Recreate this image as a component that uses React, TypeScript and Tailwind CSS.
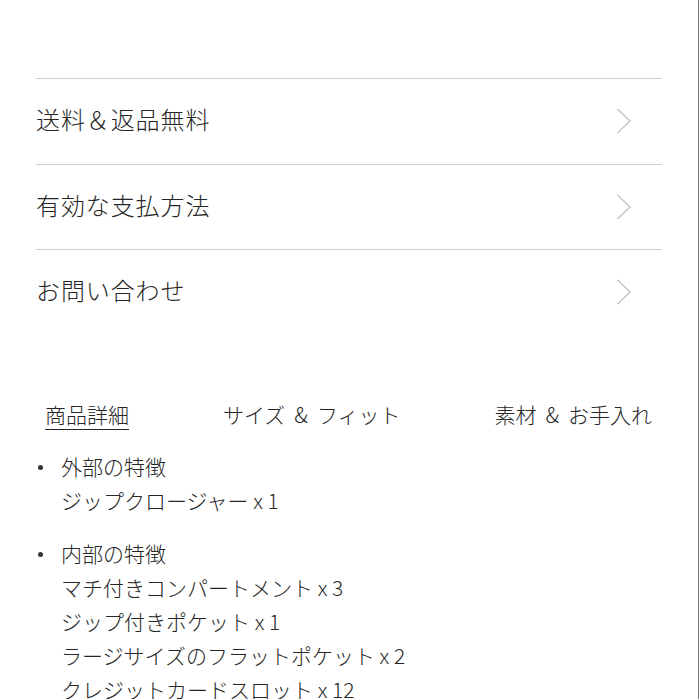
import React from "react";

const font = { fontFamily: '"Noto Sans CJK JP", "Noto Sans", sans-serif' };

function Chevron() {
  return (
    <svg width="16" height="26" viewBox="0 0 16 26" className="mr-[30px]">
      <polyline points="1.5,1 14,13 1.5,25" fill="none" stroke="#c8c8c8" strokeWidth="1.6" />
    </svg>
  );
}

const rows = ["送料＆返品無料", "有効な支払方法", "お問い合わせ"];

const groups = [
  { title: "外部の特徴", items: ["ジップクロージャー x 1"] },
  {
    title: "内部の特徴",
    items: [
      "マチ付きコンパートメント x 3",
      "ジップ付きポケット x 1",
      "ラージサイズのフラットポケット x 2",
      "クレジットカードスロット x 12",
    ],
  },
];

export default function App() {
  return (
    <div className="w-[699px] h-[699px] overflow-hidden bg-white text-[#262626] font-light" style={font}>
      <div className="w-[699px] h-[699px] border-r border-[#777] pl-[36px] pr-[36px] pt-[78px]">
        <div className="flex flex-col">
          {rows.map((r) => (
            <div key={r} className="h-[85.5px] border-t-[1.5px] border-[#cfcfcf] flex items-center justify-between">
              <span className="text-[24px] leading-none tracking-[0.9px] -mt-[4px]">{r}</span>
              <Chevron />
            </div>
          ))}
        </div>
        <div className="mt-[65px] flex justify-between px-[9px] text-[21px] leading-[28px]">
          <span className="underline underline-offset-[6px] decoration-1">商品詳細</span>
          <span>
            サイズ<span className="mx-[9px]">&amp;</span>フィット
          </span>
          <span className="pr-px">
            素材<span className="mx-[9px]">&amp;</span>お手入れ
          </span>
        </div>
        <ul className="mt-[21px] text-[21px] leading-[34px]">
          {groups.map((g, i) => (
            <li key={g.title} className={`relative pl-[25px] ${i > 0 ? "mt-[19px]" : ""}`}>
              <span className="absolute left-[2px] top-[16px] w-[5px] h-[5px] rounded-full bg-[#333]" />
              <div>{g.title}</div>
              {g.items.map((it) => (
                <div key={it}>{it}</div>
              ))}
            </li>
          ))}
        </ul>
      </div>
    </div>
  );
}
